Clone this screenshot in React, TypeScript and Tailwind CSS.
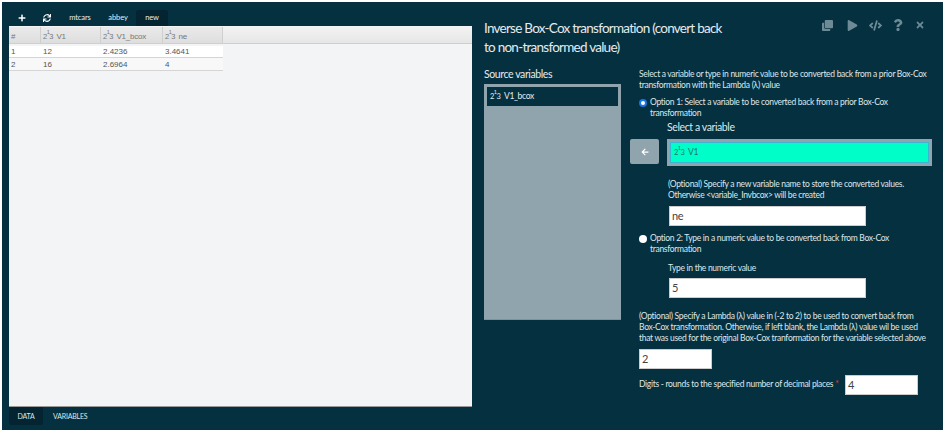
import React from "react";
import { FaPlus, FaSync, FaClone, FaPlay, FaCode, FaQuestion, FaTimes, FaArrowLeft } from "react-icons/fa";

function Num() {
  return (
    <span className="inline-flex items-end text-[7.5px] leading-[8px] mr-[3px] align-middle tracking-normal">
      <span>2</span>
      <span className="relative -top-[5px] -mx-[0.5px] text-[5.5px]">1</span>
      <span>3</span>
    </span>
  );
}

function Field({ value, className }: { value: string; className: string }) {
  return (
    <div className={`bg-white text-[#444] text-[11px] flex items-center pl-[2px] border border-[#ccc] ${className}`}>{value}</div>
  );
}

function Radio({ checked }: { checked?: boolean }) {
  return (
    <span className={`shrink-0 w-[8px] h-[8px] rounded-full mt-[2px] ${checked ? "bg-white border-[2px] border-[#1a73e8] " : "bg-white"}`} />
  );
}

const cols = ["w-[32px]", "w-[60px]", "w-[62px]", "w-[60px]"];
const rows = [
  ["1", "12", "2.4236", "3.4641"],
  ["2", "16", "2.6964", "4"],
];

export default function App() {
  return (
    <div className="w-[946px] h-[432px] bg-white pt-[2px] pl-[2px] pr-[3px] pb-[2px] overflow-hidden" style={{ fontFamily: "Lato, 'Noto Sans', sans-serif" }}>
      <div className="w-full h-full bg-[#05303f] flex text-[#e4ebee]">
        {/* Left: data grid */}
        <div className="w-[470px] pl-[7px] flex flex-col shrink-0">
          <div className="h-[24px] flex items-end text-[7.5px] tracking-[-0.1px] text-[#e8eef0]">
            <div className="w-[25px] h-[16px] flex items-center justify-center"><FaPlus className="text-white text-[8px]" /></div>
            <div className="w-[26px] h-[16px] flex items-center justify-center"><FaSync className="text-white text-[8px]" /></div>
            <div className="w-[40px] h-[16px] flex items-center justify-center">mtcars</div>
            <div className="w-[36px] h-[16px] flex items-center justify-center">abbey</div>
            <div className="w-[32px] h-[16px] flex items-center justify-center bg-[#032430] rounded-t-[3px]">new</div>
          </div>
          <div className="w-[463px] h-[381px] bg-[#f3f4f6] border-b border-[#999] text-[8px] text-[#555]" style={{ fontFamily: "'Liberation Sans', sans-serif" }}>
            <div className="h-[17px] flex bg-gradient-to-b from-[#f3f3f3] to-[#e6e6e6] border-b border-[#cfcfcf] mt-[1px]">
              <div className="flex bg-gradient-to-b from-[#eaeaea] to-[#dedede]">
                {["#", "V1", "V1_bcox", "ne"].map((h, i) => (
                  <div key={h} className={`${cols[i]} flex items-center pl-[2px] pt-[3px] border-r border-[#cfcfcf] text-[#777] tracking-[-0.2px]`}>
                    {i > 0 && <Num />}{h}
                  </div>
                ))}
              </div>
            </div>
            <div className="mt-[2px]">
              {rows.map((r, ri) => (
                <div key={ri} className={`flex w-[214px] ${ri === 0 ? "h-[12px] bg-white" : "h-[13px] bg-[#f8f8f8]"} border-b border-[#d5d5d5]`}>
                  {r.map((c, i) => (
                    <div key={i} className={`${cols[i]} flex items-center pl-[2px] pt-[1px] text-[#555]`}>{c}</div>
                  ))}
                </div>
              ))}
            </div>
          </div>
          <div className="flex h-[18px] text-[7px] text-[#dfe7ea] tracking-[-0.2px]">
            <div className="w-[34px] flex items-center justify-center bg-[#032430] rounded-b-[2px]">DATA</div>
            <div className="ml-[10px] flex items-center">VARIABLES</div>
          </div>
        </div>

        {/* Right: dialog */}
        <div className="flex-1 pl-[12px] min-w-0">
          <div className="flex justify-between pt-[17px] h-[62px]">
            <h1 className="w-[250px] text-[13.5px] tracking-[-0.75px] leading-[19px] text-[#e4ebee] font-normal">Inverse Box-Cox transformation (convert back to non-transformed value)</h1>
            <div className="flex items-start mr-[12px] -mt-[1px] text-[#6d8b97] text-[11px]">
              <span className="w-[23px] h-[14px] flex items-center justify-center"><FaClone /></span>
              <span className="w-[23px] h-[14px] flex items-center justify-center ml-[2px]"><FaPlay /></span>
              <span className="w-[22px] h-[14px] flex items-center justify-center text-[13px]"><FaCode /></span>
              <span className="w-[23px] h-[14px] flex items-center justify-center text-[12px]"><FaQuestion /></span>
              <span className="w-[22px] h-[14px] flex items-center justify-center text-[10px]"><FaTimes /></span>
            </div>
          </div>
          <div className="flex">
            <div className="w-[137px] shrink-0">
              <div className="text-[10.5px] tracking-[-0.4px] leading-[14px] mt-[3px] mb-[3px]">Source variables</div>
              <div className="h-[236px] bg-[#90a4ae] border-b border-[#7d929c] p-[3px]">
                <div className="h-[19px] bg-[#05303f] border border-[#05303f] flex items-center pl-[2px] text-[8.5px] tracking-[-0.3px] text-[#e4ebee]"><Num />V1_bcox</div>
              </div>
            </div>
            <div className="ml-[9px] flex-1 text-[8.5px] tracking-[-0.3px] leading-[11.3px] text-[#dfe7ea]">
              <div className="ml-[9px] mt-[5px] w-[295px]">Select a variable or type in numeric value to be converted back from a prior Box-Cox transformation with the Lambda (λ) value</div>
              <div className="ml-[9px] mt-[5px] flex gap-[3px] w-[270px]">
                <Radio checked />
                <span>Option 1: Select a variable to be converted back from a prior Box-Cox transformation</span>
              </div>
              <div className="ml-[37px] mt-[1px] text-[10.5px] tracking-[-0.4px] leading-[14px]">Select a variable</div>
              <div className="flex mt-[5px]">
                <div className="w-[29px] h-[25px] bg-[#90a4ae] rounded-[2px] flex items-center justify-center text-white text-[8px]"><FaArrowLeft /></div>
                <div className="ml-[8px] w-[265px] h-[27px] p-[3px] bg-[#90a4ae]">
                  <div className="h-full bg-[#00ffc8] border border-[#3fb3d0] flex items-center pl-[3px] text-[8.5px] text-[#1f7468]"><Num />V1</div>
                </div>
              </div>
              <div className="ml-[38px] mt-[13px] w-[250px]">(Optional) Specify a new variable name to store the converted values. Otherwise &lt;variable_Invbcox&gt; will be created</div>
              <Field value="ne" className="ml-[39px] mt-[4px] w-[197px] h-[20px]" />
              <div className="ml-[9px] mt-[7px] flex gap-[3px] w-[270px]">
                <Radio />
                <span>Option 2: Type in a numeric value to be converted back from Box-Cox transformation</span>
              </div>
              <div className="ml-[38px] mt-[8px]">Type in the numeric value</div>
              <Field value="5" className="ml-[39px] mt-[3px] w-[197px] h-[20px]" />
              <div className="ml-[9px] mt-[13px] w-[289px]">(Optional) Specify a Lambda (λ) value in (-2 to 2) to be used to convert back from Box-Cox transformation. Otherwise, if left blank, the Lambda (λ) value wil be used that was used for the original Box-Cox tranformation for the variable selected above</div>
              <Field value="2" className="ml-[9px] mt-[4px] w-[73px] h-[20px]" />
              <div className="ml-[9px] mt-[6px] flex items-center">
                <span className="w-[206px] whitespace-nowrap">Digits - rounds to the specified number of decimal places <span className="text-[#e53935]">*</span></span>
                <Field value="4" className="w-[73px] h-[20px]" />
              </div>
            </div>
          </div>
        </div>
      </div>
    </div>
  );
}
